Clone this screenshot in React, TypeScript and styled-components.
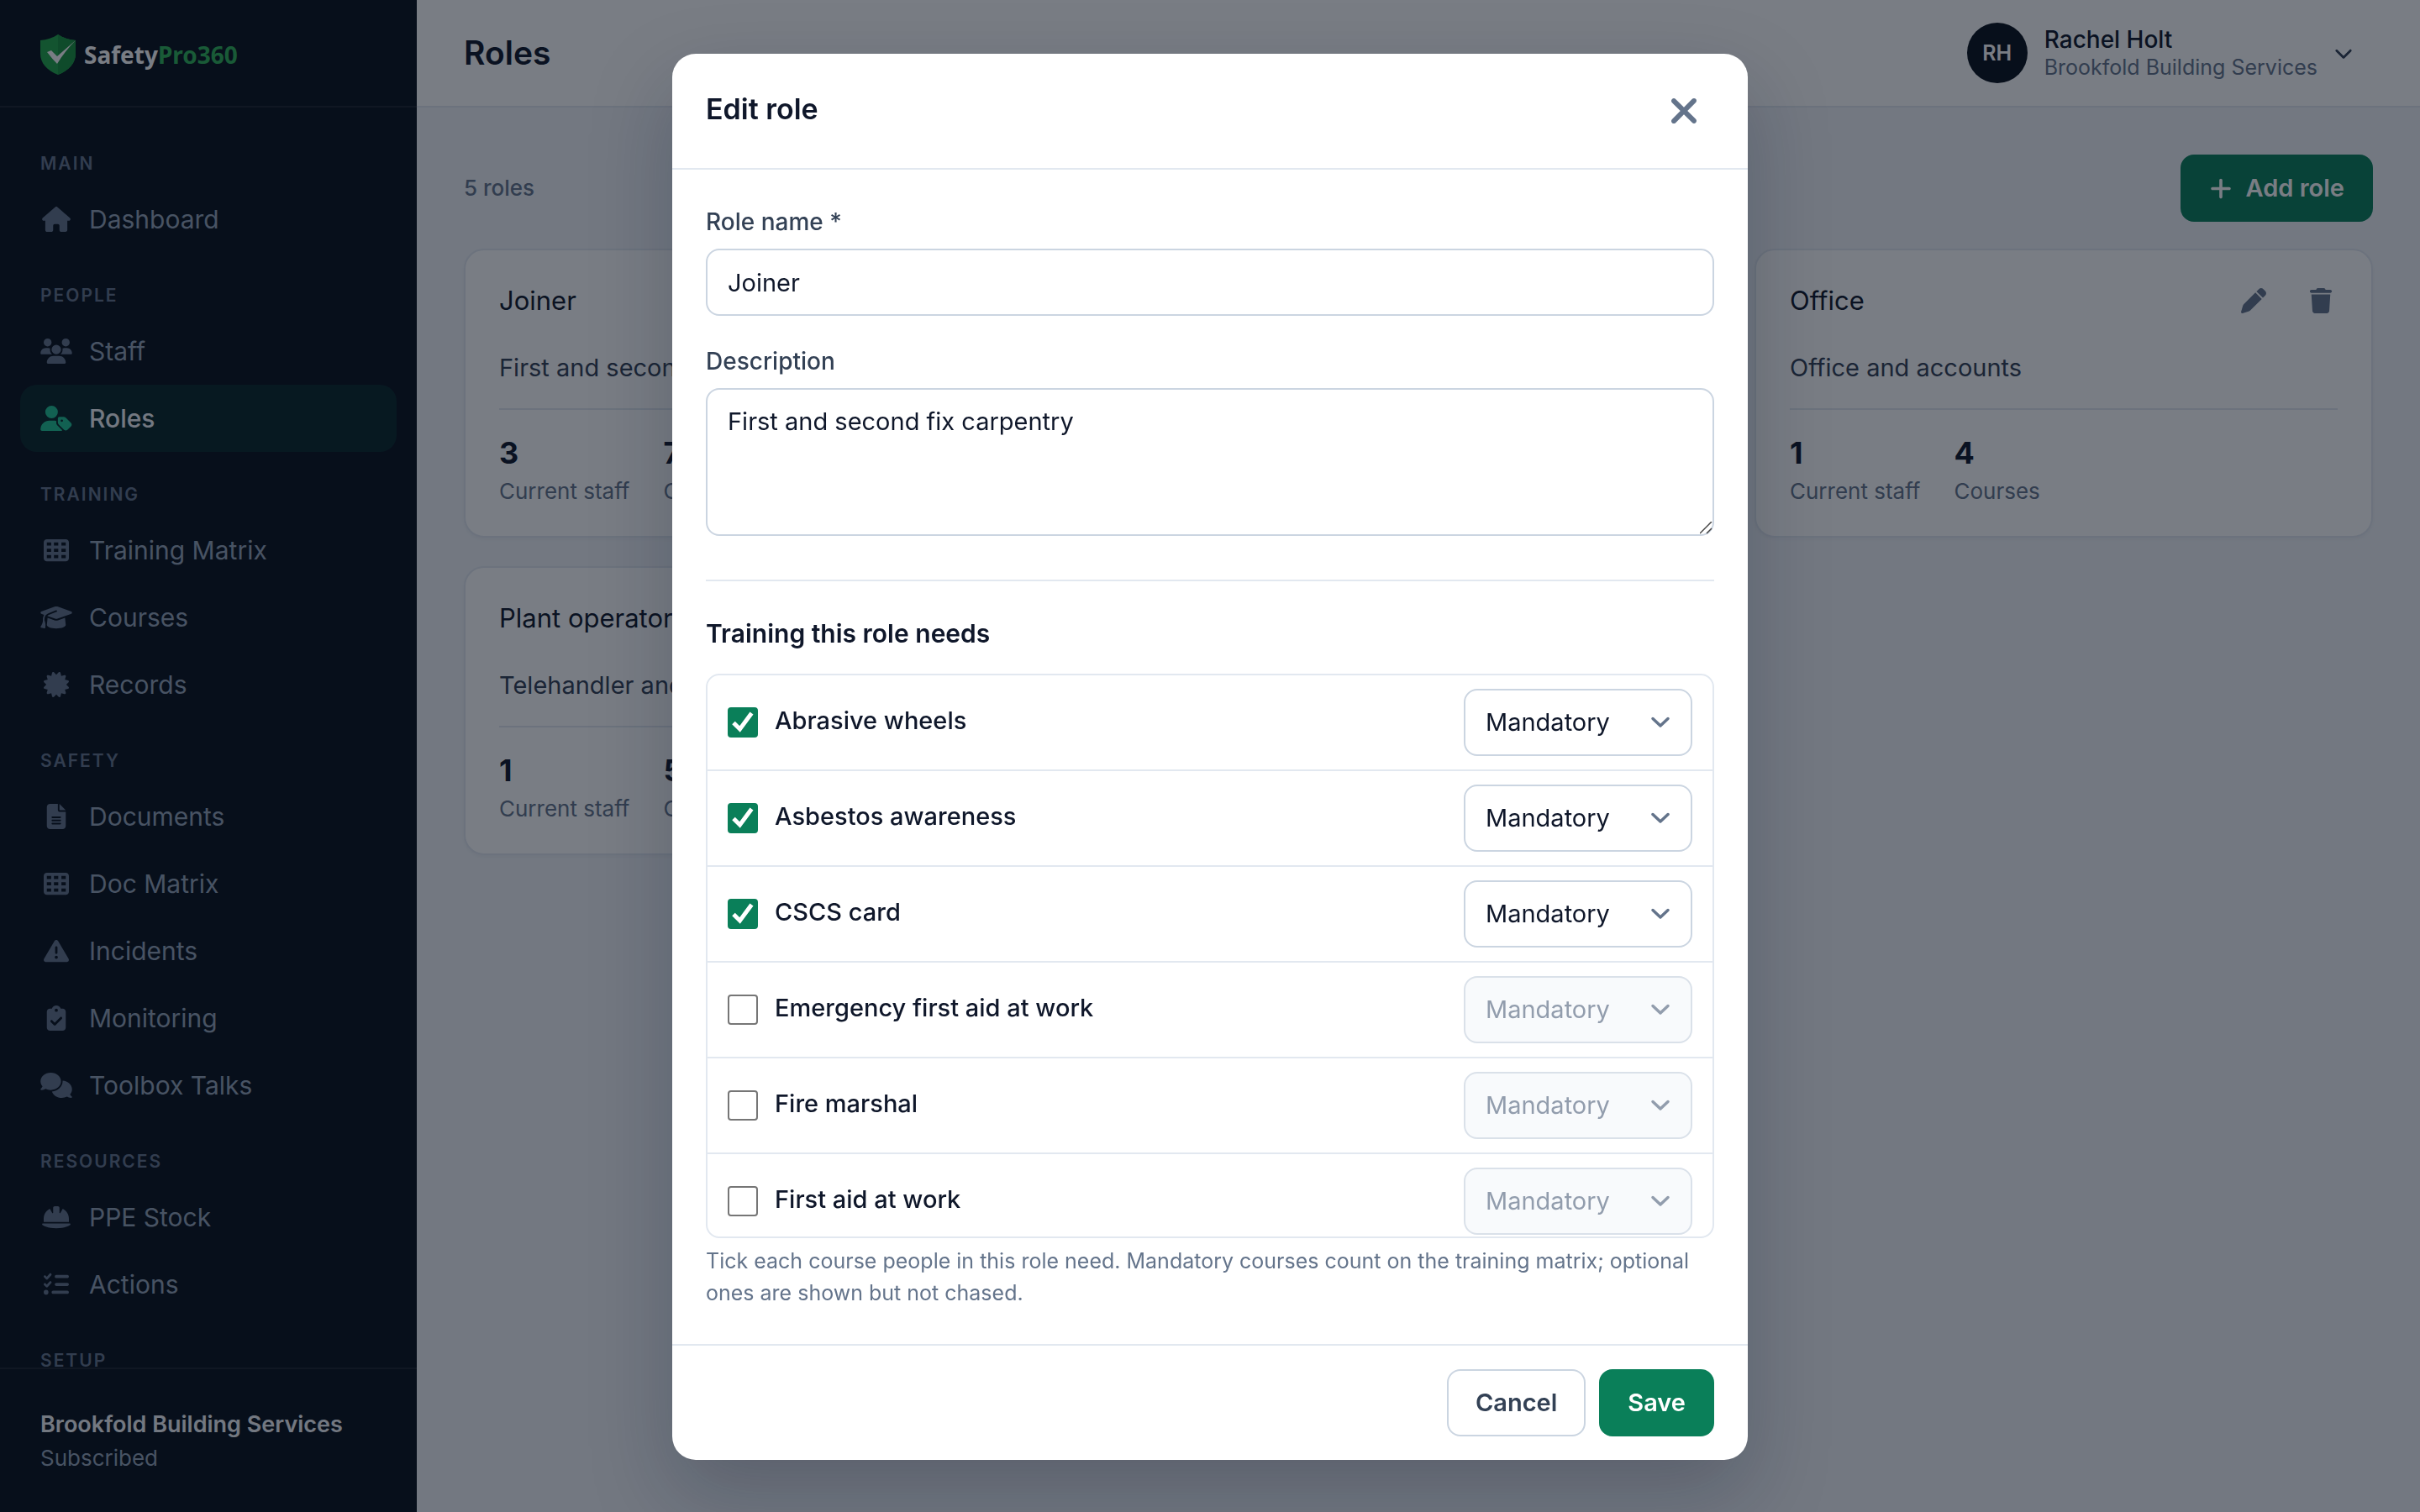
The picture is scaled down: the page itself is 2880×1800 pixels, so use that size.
import React, { useState } from "react";
import styled, { createGlobalStyle, css } from "styled-components";
import type { IconType } from "react-icons";
import {
  FaCertificate,
  FaChevronDown,
  FaClipboardCheck,
  FaComments,
  FaFileLines,
  FaGraduationCap,
  FaHelmetSafety,
  FaHouse,
  FaListCheck,
  FaPen,
  FaPlus,
  FaTableCells,
  FaTrash,
  FaTriangleExclamation,
  FaUsers,
  FaUserTag,
  FaXmark,
} from "react-icons/fa6";

const c = {
  navy: "#08101c",
  ink: "#0f172a",
  body: "#334155",
  muted: "#64748b",
  faint: "#94a3b8",
  line: "#e2e8f0",
  field: "#cbd5e1",
  page: "#f1f4f9",
  green: "#0a7f59",
  mint: "#1fc393",
};

const GlobalStyle = createGlobalStyle`
  *, *::before, *::after { box-sizing: border-box; }
  body {
    margin: 0;
    font-family: Inter, "Noto Sans", sans-serif;
    font-size: 29px;
    line-height: 44px;
    color: ${c.ink};
    background: ${c.page};
  }
  h1, h2, h3, p, ul, dl, dd { margin: 0; padding: 0; }
  ul { list-style: none; }
  button, input, select, textarea { font: inherit; color: inherit; }
`;

const Shell = styled.div`
  display: flex;
  height: 100vh;
  overflow: hidden;
`;

/* Sidebar */

const Sidebar = styled.aside`
  flex: 0 0 496px;
  display: flex;
  flex-direction: column;
  background: ${c.navy};
  color: ${c.faint};
`;

const Brand = styled.a`
  flex: none;
  display: flex;
  align-items: center;
  gap: 8px;
  height: 128px;
  padding: 4px 46px 0;
  border-bottom: 2px solid rgba(255, 255, 255, 0.08);
  color: #ffffff;
  font-family: "Noto Sans", sans-serif;
  font-size: 28px;
  font-weight: 700;
  text-decoration: none;

  svg {
    width: 46px;
    height: 50px;
  }
`;

const BrandAccent = styled.span`
  color: #2fb457;
`;

const Nav = styled.nav`
  flex: 1;
  min-height: 0;
  overflow: hidden;
  padding: 16px 24px 0;
`;

const NavHeading = styled.h3`
  margin-top: 24px;
  padding: 0 24px;
  font-size: 21px;
  line-height: 53px;
  font-weight: 600;
  letter-spacing: 2px;
  text-transform: uppercase;
  color: ${c.muted};
`;

const NavLink = styled.a<{ $active?: boolean }>`
  display: flex;
  align-items: center;
  gap: 20px;
  height: 80px;
  padding: 0 24px;
  border-radius: 20px;
  color: ${c.faint};
  font-size: 30px;
  text-decoration: none;

  ${(p) =>
    p.$active &&
    css`
      background: rgba(16, 185, 129, 0.13);
      color: #f1f5f9;
      font-weight: 500;
    `}
`;

const NavIcon = styled.span<{ $active?: boolean }>`
  display: flex;
  color: ${(p) => (p.$active ? c.mint : c.muted)};

  svg {
    width: 38px;
    height: 30px;
  }
`;

const Account = styled.div`
  flex: none;
  height: 172px;
  padding: 46px 48px 0;
  border-top: 2px solid rgba(255, 255, 255, 0.08);
  line-height: 40px;
`;

const AccountName = styled.p`
  font-size: 27px;
  font-weight: 600;
  color: #f1f5f9;
`;

const AccountPlan = styled.p`
  font-size: 26px;
  color: ${c.faint};
`;

/* Page */

const Page = styled.div`
  flex: 1;
  min-width: 0;
  display: flex;
  flex-direction: column;
`;

const TopBar = styled.header`
  flex: none;
  display: flex;
  align-items: center;
  justify-content: space-between;
  height: 128px;
  padding: 0 80px 0 56px;
  background: #ffffff;
  border-bottom: 2px solid ${c.line};
`;

const PageTitle = styled.h1`
  font-size: 39px;
  line-height: 56px;
  font-weight: 600;
`;

const UserButton = styled.button`
  display: flex;
  align-items: center;
  gap: 20px;
  padding: 0;
  border: 0;
  background: none;
  text-align: left;

  > svg {
    width: 22px;
    height: 22px;
    color: ${c.body};
  }
`;

const Avatar = styled.span`
  display: grid;
  place-items: center;
  width: 72px;
  height: 72px;
  border-radius: 50%;
  background: ${c.navy};
  color: #ffffff;
  font-size: 25px;
  font-weight: 600;
`;

const UserText = styled.span`
  display: flex;
  flex-direction: column;
  padding-top: 2px;
  line-height: 33px;
`;

const UserName = styled.span`
  font-size: 28px;
  font-weight: 500;
`;

const UserCompany = styled.span`
  font-size: 25px;
  color: ${c.muted};
`;

const Content = styled.main`
  flex: 1;
  padding: 56px;
`;

const Toolbar = styled.div`
  display: flex;
  align-items: center;
  justify-content: space-between;
  height: 80px;
  margin-bottom: 32px;
`;

const Count = styled.p`
  font-size: 26px;
  font-weight: 500;
  color: ${c.muted};
`;

const Button = styled.button<{ $primary?: boolean }>`
  display: inline-flex;
  align-items: center;
  justify-content: center;
  gap: 16px;
  height: 80px;
  padding: 0 32px;
  border: 2px solid ${(p) => (p.$primary ? c.green : c.field)};
  border-radius: 16px;
  background: ${(p) => (p.$primary ? c.green : "#ffffff")};
  color: ${(p) => (p.$primary ? "#ffffff" : c.body)};
  font-weight: 600;

  svg {
    width: 28px;
  }
`;

const Grid = styled.div`
  display: grid;
  grid-template-columns: repeat(3, 1fr);
  gap: 34px 32px;
`;

const Card = styled.article`
  display: flex;
  flex-direction: column;
  height: 344px;
  padding: 20px 40px;
  border: 2px solid ${c.line};
  border-radius: 24px;
  background: #ffffff;
  box-shadow: 0 2px 4px rgba(15, 23, 42, 0.04);
`;

const CardHead = styled.div`
  display: flex;
  align-items: center;
  justify-content: space-between;
  height: 80px;
`;

const CardTitle = styled.h2`
  font-size: 31px;
  font-weight: 400;
`;

const CardActions = styled.div`
  display: flex;
  margin-right: -20px;
`;

const IconButton = styled.button`
  display: grid;
  place-items: center;
  width: 80px;
  height: 80px;
  padding: 0;
  border: 0;
  background: none;
  color: ${c.muted};
  font-size: 30px;
`;

const CardText = styled.p`
  margin: 18px 0 26px;
  line-height: 44px;
  color: ${c.body};
`;

const Stats = styled.dl`
  display: flex;
  gap: 40px;
  padding-top: 26px;
  border-top: 2px solid ${c.line};
`;

const Stat = styled.div`
  display: flex;
  flex-direction: column-reverse;
`;

const StatValue = styled.dd`
  font-size: 36px;
  line-height: 50px;
  font-weight: 700;
`;

const StatLabel = styled.dt`
  font-size: 26px;
  line-height: 42px;
  color: ${c.muted};
`;

/* Dialog */

const Backdrop = styled.div`
  position: fixed;
  inset: 0;
  display: flex;
  align-items: flex-start;
  justify-content: center;
  padding-top: 64px;
  background: rgba(8, 15, 27, 0.54);
`;

const Dialog = styled.section`
  width: 1280px;
  max-width: 100%;
  border-radius: 28px;
  background: #ffffff;
  box-shadow: 0 40px 96px rgba(15, 23, 42, 0.25);
`;

const DialogHead = styled.header`
  display: flex;
  align-items: center;
  justify-content: space-between;
  height: 138px;
  padding: 0 40px;
  border-bottom: 2px solid ${c.line};
`;

const DialogTitle = styled.h2`
  padding-bottom: 4px;
  font-size: 34px;
  font-weight: 600;
`;

const CloseButton = styled.button`
  display: grid;
  place-items: center;
  width: 72px;
  height: 72px;
  padding: 0;
  border: 0;
  background: none;
  color: ${c.muted};
  font-size: 48px;
`;

const DialogBody = styled.div`
  padding: 40px 40px 42px;
`;

const Field = styled.div`
  display: flex;
  flex-direction: column;
  gap: 10px;
  margin-bottom: 32px;
`;

const FieldLabel = styled.label`
  font-size: 28px;
  font-weight: 500;
  color: ${c.body};
`;

const control = css`
  border: 2px solid ${c.field};
  border-radius: 16px;
  background-color: #ffffff;
  color: ${c.ink};
  outline: none;
`;

const TextInput = styled.input`
  ${control}
  width: 100%;
  height: 80px;
  padding: 0 24px;
`;

const grip =
  "url(\"data:image/svg+xml,%3Csvg xmlns='http://www.w3.org/2000/svg' viewBox='0 0 15 15'%3E%3Cpath d='M0 14 14 0M8 14 14 8' fill='none' stroke='%23444444' stroke-width='1.500'/%3E%3C/svg%3E\")";

const TextArea = styled.textarea`
  ${control}
  display: block;
  width: 100%;
  height: 176px;
  padding: 16px 24px;
  resize: vertical;

  &::-webkit-resizer {
    background: ${grip} center / 15px 15px no-repeat;
  }
`;

const Training = styled.section`
  margin-top: 52px;
  padding-top: 40px;
  border-top: 2px solid ${c.line};
`;

const TrainingTitle = styled.h3`
  margin-bottom: 26px;
  font-size: 30px;
  font-weight: 600;
`;

const CourseList = styled.ul`
  height: 672px;
  overflow-y: auto;
  scrollbar-width: none;
  border: 2px solid ${c.line};
  border-radius: 16px;
`;

const CourseRow = styled.li`
  display: flex;
  align-items: center;
  justify-content: space-between;
  padding: 16px 24px;

  & + & {
    border-top: 2px solid ${c.line};
  }
`;

const CourseLabel = styled.label`
  display: flex;
  align-items: center;
  gap: 20px;
`;

const CourseName = styled.span`
  padding-bottom: 4px;
  font-weight: 500;
`;

const tick =
  "url(\"data:image/svg+xml,%3Csvg xmlns='http://www.w3.org/2000/svg' viewBox='0 0 36 36'%3E%3Cpath d='M7 18.500 14.500 26 28.500 7' fill='none' stroke='white' stroke-width='5'/%3E%3C/svg%3E\")";

const Checkbox = styled.input`
  appearance: none;
  width: 36px;
  height: 36px;
  margin: 0;
  border: 2px solid #767676;
  border-radius: 4px;
  background: #ffffff center / 36px 36px no-repeat;

  &:checked {
    border-color: ${c.green};
    background-color: ${c.green};
    background-image: ${tick};
  }
`;

const chevron =
  "url(\"data:image/svg+xml,%3Csvg xmlns='http://www.w3.org/2000/svg' viewBox='0 0 24 24'%3E%3Cpath d='M3 7.500 12 16 21 7.500' fill='none' stroke='%2364748b' stroke-width='3.500' stroke-linecap='round' stroke-linejoin='round'/%3E%3C/svg%3E\")";

const Select = styled.select`
  ${control}
  appearance: none;
  width: 272px;
  height: 80px;
  padding: 0 64px 0 24px;
  background-image: ${chevron};
  background-repeat: no-repeat;
  background-position: right 24px center;
  background-size: 24px 24px;

  &:disabled {
    opacity: 0.7;
    color: ${c.muted};
    background-color: #f6f8fb;
  }
`;

const Help = styled.p`
  margin-top: 8px;
  font-size: 25px;
  line-height: 38px;
  color: ${c.muted};
`;

const DialogFoot = styled.footer`
  display: flex;
  justify-content: flex-end;
  gap: 16px;
  padding: 28px 40px;
  border-top: 2px solid ${c.line};
`;

type NavEntry = { label: string; icon: IconType };

const sections: { title: string; items: NavEntry[] }[] = [
  { title: "Main", items: [{ label: "Dashboard", icon: FaHouse }] },
  {
    title: "People",
    items: [
      { label: "Staff", icon: FaUsers },
      { label: "Roles", icon: FaUserTag },
    ],
  },
  {
    title: "Training",
    items: [
      { label: "Training Matrix", icon: FaTableCells },
      { label: "Courses", icon: FaGraduationCap },
      { label: "Records", icon: FaCertificate },
    ],
  },
  {
    title: "Safety",
    items: [
      { label: "Documents", icon: FaFileLines },
      { label: "Doc Matrix", icon: FaTableCells },
      { label: "Incidents", icon: FaTriangleExclamation },
      { label: "Monitoring", icon: FaClipboardCheck },
      { label: "Toolbox Talks", icon: FaComments },
    ],
  },
  {
    title: "Resources",
    items: [
      { label: "PPE Stock", icon: FaHelmetSafety },
      { label: "Actions", icon: FaListCheck },
    ],
  },
  { title: "Setup", items: [] },
];

const roles = [
  { name: "Joiner", text: "First and second fix carpentry", staff: 3, courses: 7 },
  { name: "", text: "", staff: 0, courses: 0 },
  { name: "Office", text: "Office and accounts", staff: 1, courses: 4 },
  { name: "Plant operator", text: "Telehandler and", staff: 1, courses: 5 },
];

const courses = [
  { name: "Abrasive wheels", needed: true },
  { name: "Asbestos awareness", needed: true },
  { name: "CSCS card", needed: true },
  { name: "Emergency first aid at work", needed: false },
  { name: "Fire marshal", needed: false },
  { name: "First aid at work", needed: false },
];

function Shield() {
  return (
    <svg viewBox="0 0 46 50" aria-hidden="true">
      <path
        d="M23 1C17 5 10 7.500 2 8v16c0 11 8 20 21 25 13-5 21-14 21-25V8C36 7.500 29 5 23 1Z"
        fill="#22a548"
      />
      <path d="M23 1C29 5 36 7.500 44 8v16c0 11-8 20-21 25Z" fill="#1a933e" />
      <path d="M10 22 15 20 22 27 44 8C36 16 28 26 22 36Q16 30 10 22Z" fill="#ffffff" />
    </svg>
  );
}

function RoleCard({ role }: { role: (typeof roles)[number] }) {
  if (!role.name) return <Card />;
  return (
    <Card>
      <CardHead>
        <CardTitle>{role.name}</CardTitle>
        <CardActions>
          <IconButton aria-label="Edit">
            <FaPen />
          </IconButton>
          <IconButton aria-label="Delete">
            <FaTrash />
          </IconButton>
        </CardActions>
      </CardHead>
      <CardText>{role.text}</CardText>
      <Stats>
        <Stat>
          <StatLabel>Current staff</StatLabel>
          <StatValue>{role.staff}</StatValue>
        </Stat>
        <Stat>
          <StatLabel>Courses</StatLabel>
          <StatValue>{role.courses}</StatValue>
        </Stat>
      </Stats>
    </Card>
  );
}

export default function App() {
  const [ticked, setTicked] = useState(courses.map((x) => x.needed));

  return (
    <>
      <GlobalStyle />
      <Shell>
        <Sidebar>
          <Brand href="#">
            <Shield />
            <span>
              Safety<BrandAccent>Pro360</BrandAccent>
            </span>
          </Brand>
          <Nav>
            {sections.map((s) => (
              <React.Fragment key={s.title}>
                <NavHeading>{s.title}</NavHeading>
                {s.items.map(({ label, icon: Icon }) => (
                  <NavLink key={label} href="#" $active={label === "Roles"}>
                    <NavIcon $active={label === "Roles"}>
                      <Icon />
                    </NavIcon>
                    {label}
                  </NavLink>
                ))}
              </React.Fragment>
            ))}
          </Nav>
          <Account>
            <AccountName>Brookfold Building Services</AccountName>
            <AccountPlan>Subscribed</AccountPlan>
          </Account>
        </Sidebar>

        <Page>
          <TopBar>
            <PageTitle>Roles</PageTitle>
            <UserButton>
              <Avatar>RH</Avatar>
              <UserText>
                <UserName>Rachel Holt</UserName>
                <UserCompany>Brookfold Building Services</UserCompany>
              </UserText>
              <FaChevronDown />
            </UserButton>
          </TopBar>
          <Content>
            <Toolbar>
              <Count>5 roles</Count>
              <Button $primary>
                <FaPlus />
                Add role
              </Button>
            </Toolbar>
            <Grid>
              {roles.map((role, i) => (
                <RoleCard key={i} role={role} />
              ))}
            </Grid>
          </Content>
        </Page>
      </Shell>

      <Backdrop>
        <Dialog role="dialog" aria-modal="true" aria-labelledby="dialog-title">
          <DialogHead>
            <DialogTitle id="dialog-title">Edit role</DialogTitle>
            <CloseButton aria-label="Close">
              <FaXmark />
            </CloseButton>
          </DialogHead>
          <DialogBody>
            <Field>
              <FieldLabel htmlFor="role-name">Role name *</FieldLabel>
              <TextInput id="role-name" defaultValue="Joiner" />
            </Field>
            <Field>
              <FieldLabel htmlFor="role-text">Description</FieldLabel>
              <TextArea id="role-text" defaultValue="First and second fix carpentry" />
            </Field>
            <Training>
              <TrainingTitle>Training this role needs</TrainingTitle>
              <CourseList>
                {courses.map((course, i) => (
                  <CourseRow key={course.name}>
                    <CourseLabel>
                      <Checkbox
                        type="checkbox"
                        checked={ticked[i]}
                        onChange={() => setTicked(ticked.map((v, n) => (n === i ? !v : v)))}
                      />
                      <CourseName>{course.name}</CourseName>
                    </CourseLabel>
                    <Select aria-label={course.name} disabled={!ticked[i]}>
                      <option>Mandatory</option>
                      <option>Optional</option>
                    </Select>
                  </CourseRow>
                ))}
              </CourseList>
              <Help>
                Tick each course people in this role need. Mandatory courses count on the training
                matrix; optional ones are shown but not chased.
              </Help>
            </Training>
          </DialogBody>
          <DialogFoot>
            <Button>Cancel</Button>
            <Button $primary>Save</Button>
          </DialogFoot>
        </Dialog>
      </Backdrop>
    </>
  );
}
